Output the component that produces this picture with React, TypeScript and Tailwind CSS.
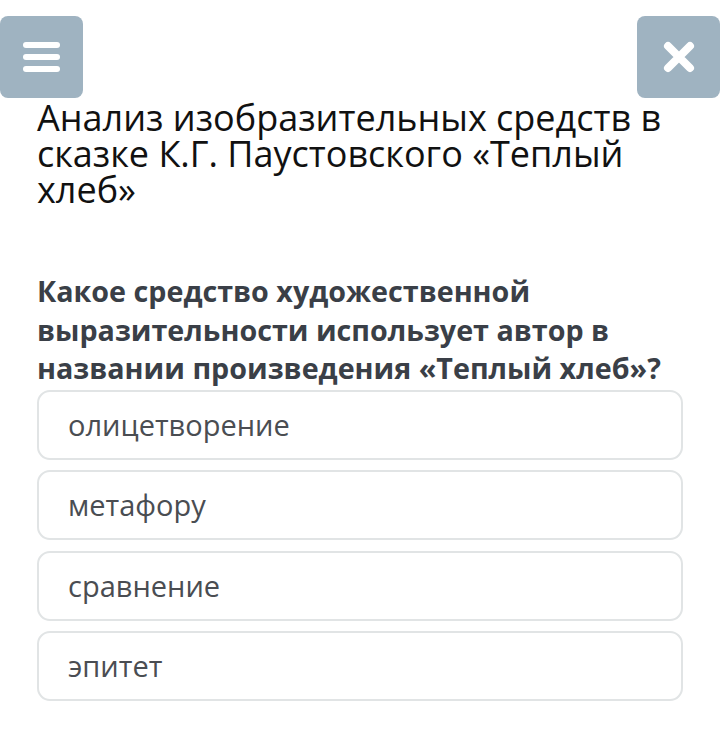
import React from "react";

const options = ["олицетворение", "метафору", "сравнение", "эпитет"];

export default function App() {
  return (
    <div className="w-[720px] h-[752px] bg-white overflow-hidden" style={{ fontFamily: '"Open Sans", "Noto Sans", sans-serif' }}>
      <div className="flex justify-between pt-4">
        <div className="w-[83px] h-[82px] bg-[#9fb3c1] rounded-lg flex flex-col items-center justify-center gap-[6px]">
          <div className="w-[37px] h-[6px] bg-white rounded-sm" />
          <div className="w-[37px] h-[6px] bg-white rounded-sm" />
          <div className="w-[37px] h-[6px] bg-white rounded-sm" />
        </div>
        <div className="w-[83px] h-[82px] bg-[#9fb3c1] rounded-lg flex items-center justify-center">
          <svg width="32" height="32" viewBox="0 0 32 32">
            <path d="M5 5 L27 27 M27 5 L5 27" stroke="white" strokeWidth="8" strokeLinecap="round" />
          </svg>
        </div>
      </div>
      <div className="px-[37px]">
        <h1 className="text-[36px] leading-[36px] text-[#111] font-normal mt-[2px]">
          Анализ изобразительных средств в сказке К.Г. Паустовского «Теплый хлеб»
        </h1>
        <p className="mt-[64px] text-[28.7px] leading-[38.5px] font-bold text-[#3a3f47] w-[646px]">
          Какое средство художественной выразительности использует автор в названии произведения «Теплый хлеб»?
        </p>
        <div className="mt-[2px] flex flex-col gap-[10.5px] w-[646px]">
          {options.map((o) => (
            <div key={o} className="h-[70px] border-2 border-[#e1e4e5] rounded-[13px] flex items-center px-[29px] text-[29px] text-[#4a4d52]">
              {o}
            </div>
          ))}
        </div>
      </div>
    </div>
  );
}
